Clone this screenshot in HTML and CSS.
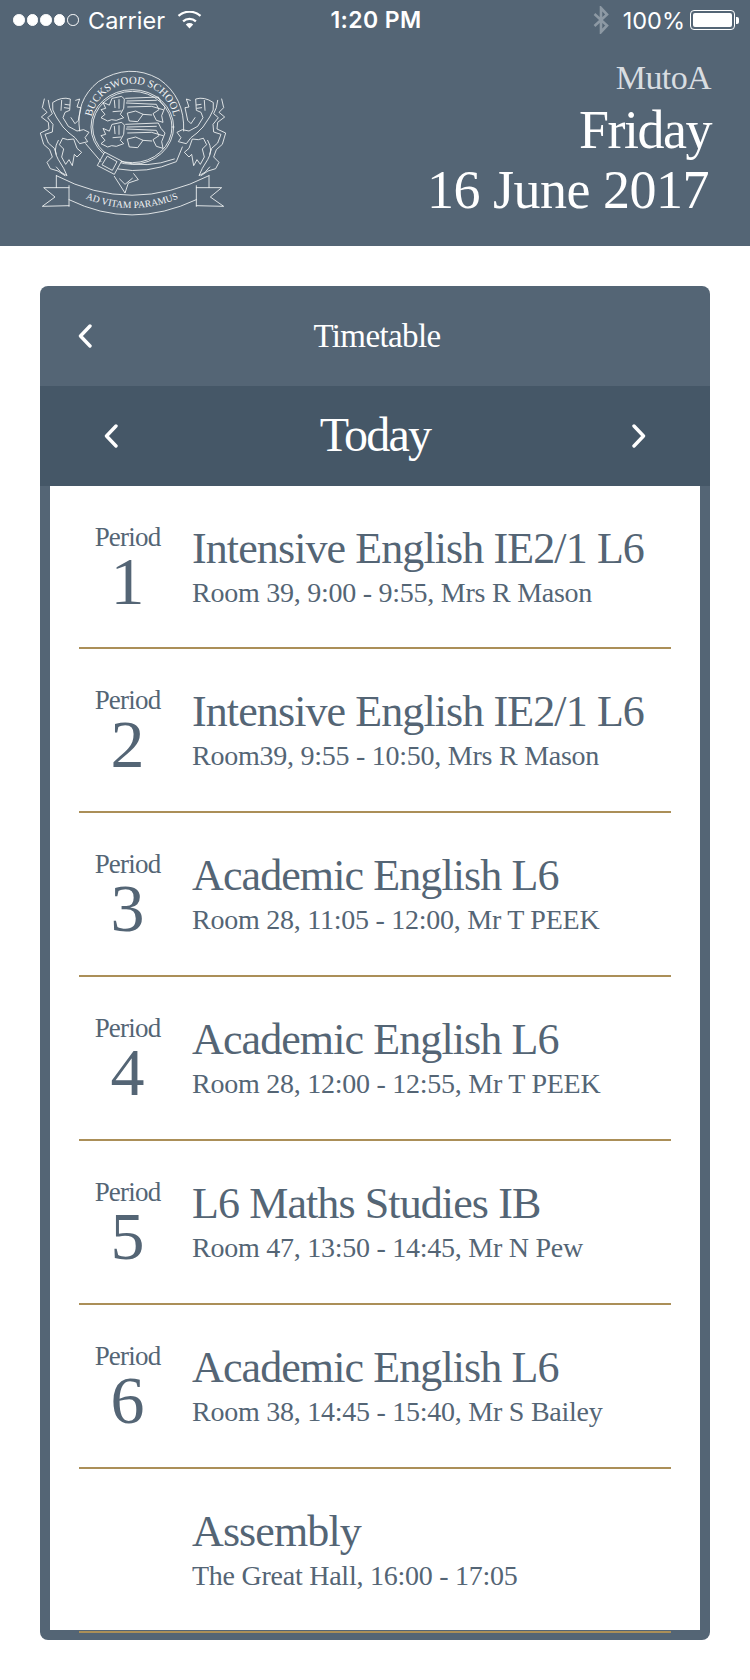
FILE: index.html
```html
<!DOCTYPE html>
<html lang="en">
<head>
<meta charset="utf-8">
<title>Timetable</title>
<link rel="stylesheet" href="styles.css">
</head>
<body>
<header class="top">
  <div class="status">
    <div class="status-left">
      <span class="signal"><i></i><i></i><i></i><i></i><i class="off"></i></span>
      <span>Carrier</span>
      <svg class="wifi" viewBox="0 0 24 18"><path d="M12 17.5 8.3 13.4a5.4 5.4 0 0 1 7.4 0Z" fill="#fff"/><path d="M5.600 10.400a9.400 9.400 0 0 1 12.800 0" fill="none" stroke="#fff" stroke-width="2.200"/><path d="M1 4.900a16.500 16.500 0 0 1 22 0" fill="none" stroke="#fff" stroke-width="2.200"/></svg>
    </div>
    <div class="status-time">1:20 PM</div>
    <div class="status-right">
      <svg class="bt" viewBox="0 0 16 28"><path d="M1.500 8 14 19.500 8 26V2l6 6.500L1.500 20" fill="none" stroke="#8d99a4" stroke-width="2.600"/></svg>
      <span>100%</span>
      <span class="battery"><span class="battery-fill"></span></span><span class="battery-tip"></span>
    </div>
  </div>
  <div class="brand">
    <svg class="crest" viewBox="115 200 570 450" fill="none" stroke="#f2f4f5" stroke-width="2.600" stroke-linejoin="round" stroke-linecap="round">
      <defs>
        <path id="ringText" d="M274 372 A125 122 0 1 1 524 372"/>
        <path id="ribbonText" d="M222 578 Q395 668 572 578"/>
        <g id="lion">
          <path d="M134 296 L128 322 L142 336 L125 350 L146 366 L148 386 L122 398 L132 432 L150 448 L158 470 L142 486 L152 505 L175 512 L196 526"/>
          <path d="M146 300 L150 322 L158 340 L144 352 L160 372 L158 395 L136 402 L146 428 L164 444 L170 462"/>
          <path d="M160 306 Q186 288 212 296 L210 330 L196 336 L190 352 L206 378 L232 392 L252 388 L268 396 L256 412 L264 424 L240 430 L226 412 L208 398 L190 380 L170 350 L160 330 Z"/>
          <path d="M186 300 L184 330 M196 312 L210 314 M194 322 L208 324"/>
          <path d="M228 300 L240 296 L232 320 L244 322 L236 360 L226 370 L214 352"/>
          <path d="M190 414 L204 418 L222 416 L232 444 L246 456 L232 470 L224 462 L218 496 L208 478 L198 492 L186 470 L192 446 L180 434 Z"/>
          <path d="M176 420 Q158 450 176 478 L192 504 L202 526 L184 516 L170 500"/>
        </g>
        <g id="shieldLion">
          <path d="M338 294 L366 288 L374 296 L372 324 L362 342 L372 352 L350 360 L336 358 L324 362 L304 352 L316 342 L304 328 L318 324 L310 306 L328 314 Z"/>
          <path d="M344 300 L346 322 M358 298 L358 324 M340 334 L364 332"/>
          <path d="M378 294 L476 290 L484 306 L496 320 L486 346 L490 366 L470 360 L460 340 L478 328 L470 312 L380 308"/>
          <path d="M382 302 L470 300 M384 320 L456 318 L490 328"/>
          <path d="M384 338 L408 332 L430 342 L414 364 L390 362 Z M430 342 L456 344"/>
        </g>
      </defs>
      <path d="M240 392 Q226 300 296 244 Q388 186 478 236 Q556 290 552 392"/>
      <ellipse cx="398" cy="380" rx="124" ry="112"/>
      <ellipse cx="398" cy="380" rx="119" ry="107"/>
      <use href="#lion"/>
      <use href="#lion" transform="matrix(-1 0 0 1 800 0)"/>
      <use href="#shieldLion"/>
      <use href="#shieldLion" transform="translate(0 78)"/>
      <path d="M316 456 L366 482 L344 522 L294 496 Z M324 468 L352 484 L338 510 L308 494 Z" fill="#546575"/>
      <path d="M366 484 Q440 506 524 476 M356 506 Q440 522 530 484 L548 440 M258 430 L304 484"/>
      <path d="M344 528 L376 578 L386 548 L416 538 L402 520 M360 536 L376 552 L398 534"/>
      <path d="M170 526 Q395 644 628 526 M208 598 Q395 690 590 598"/>
      <path d="M170 526 V562 M628 526 V562 M208 556 V618 M590 556 V618"/>
      <path d="M208 616 L128 618 L166 590 L132 562 L208 562 M590 562 L666 562 L632 590 L672 618 L590 616"/>
      <text class="crest-text"><textPath href="#ringText" startOffset="50%">BUCKSWOOD SCHOOL</textPath></text>
      <text class="crest-text small"><textPath href="#ribbonText" startOffset="50%">AD VITAM PARAMUS</textPath></text>
    </svg>
    <div class="who">
      <div class="who-name">MutoA</div>
      <div class="who-day">Friday</div>
      <div class="who-date">16 June 2017</div>
    </div>
  </div>
</header>
<main class="card">
  <div class="nav">
    <svg class="chev" viewBox="0 0 14 24"><path d="M12 2 2.500 12 12 22"/></svg>
    <div class="nav-title">Timetable</div>
    <span></span>
  </div>
  <div class="day">
    <svg class="chev" viewBox="0 0 14 24"><path d="M12 2 2.500 12 12 22"/></svg>
    <div class="day-title">Today</div>
    <svg class="chev" viewBox="0 0 14 24"><path d="M2 2 11.500 12 2 22"/></svg>
  </div>
  <div class="body">
    <ul class="list">
      <li class="row"><div class="period"><span class="p-label">Period</span><span class="p-num">1</span></div><div class="info"><div class="title">Intensive English IE2/1 L6</div><div class="sub">Room 39, 9:00 - 9:55, Mrs R Mason</div></div></li>
      <li class="row"><div class="period"><span class="p-label">Period</span><span class="p-num">2</span></div><div class="info"><div class="title">Intensive English IE2/1 L6</div><div class="sub">Room39, 9:55 - 10:50, Mrs R Mason</div></div></li>
      <li class="row"><div class="period"><span class="p-label">Period</span><span class="p-num">3</span></div><div class="info"><div class="title">Academic English L6</div><div class="sub">Room 28, 11:05 - 12:00, Mr T PEEK</div></div></li>
      <li class="row"><div class="period"><span class="p-label">Period</span><span class="p-num">4</span></div><div class="info"><div class="title">Academic English L6</div><div class="sub">Room 28, 12:00 - 12:55, Mr T PEEK</div></div></li>
      <li class="row"><div class="period"><span class="p-label">Period</span><span class="p-num">5</span></div><div class="info"><div class="title">L6 Maths Studies IB</div><div class="sub">Room 47, 13:50 - 14:45, Mr N Pew</div></div></li>
      <li class="row"><div class="period"><span class="p-label">Period</span><span class="p-num">6</span></div><div class="info"><div class="title">Academic English L6</div><div class="sub">Room 38, 14:45 - 15:40, Mr S Bailey</div></div></li>
      <li class="row"><div class="period"></div><div class="info"><div class="title">Assembly</div><div class="sub">The Great Hall, 16:00 - 17:05</div></div></li>
    </ul>
  </div>
</main>
</body>
</html>
```
FILE: styles.css
```css
* { box-sizing: border-box; }
html, body { margin: 0; padding: 0; }
body { width: 750px; height: 1680px; background: #fff; font-family: "Liberation Serif", serif; color: #546575; overflow: hidden; }

.top { height: 246px; background: #546575; color: #fff; }
.status { display: grid; grid-template-columns: 1fr auto 1fr; align-items: center; height: 40px; padding: 0 11px 0 13px; font-family: Inter, "Liberation Sans", sans-serif; font-size: 23.500px; color: #fff; }
.status-left { display: flex; align-items: center; gap: 9px; }
.signal { display: flex; gap: 2px; }
.signal i { display: block; width: 11.600px; height: 11.600px; border-radius: 50%; background: #fff; border: 1px solid #fff; }
.signal i.off { background: none; }
.wifi { width: 25px; height: 18px; margin-left: 3px; }
.status-time { font-weight: 600; font-size: 23px; letter-spacing: 0.400px; }
.status-right { display: flex; align-items: center; justify-content: flex-end; }
.bt { width: 16px; height: 28px; margin-right: 14px; }
.battery { display: block; width: 45px; height: 20px; margin-left: 5px; padding: 2px; border: 1px solid #fff; border-radius: 4px; }
.battery-fill { display: block; height: 100%; background: #fff; border-radius: 2px; }
.battery-tip { display: block; width: 3px; height: 7px; margin-left: 1px; background: #fff; border-radius: 0 2px 2px 0; }

.brand { display: flex; justify-content: space-between; align-items: flex-start; padding: 17px 39px 0 38px; }
.crest { display: block; width: 190px; height: 150px; margin-top: 9.670px; }
.crest-text { font-family: "Liberation Serif", serif; font-size: 32px; fill: #f2f4f5; stroke: none; text-anchor: middle; }
.crest-text.small { font-size: 29px; }
.who { text-align: right; }
.who-name { font-size: 34px; line-height: 42px; color: #d9dde1; letter-spacing: -0.600px; }
.who-day { font-size: 54px; line-height: 62px; letter-spacing: -1.500px; }
.who-date { font-size: 54px; line-height: 58px; letter-spacing: -0.500px; margin-right: 2px; }

.card { width: 670px; height: 1354px; margin: 40px 0 0 40px; background: #546575; border-radius: 8px; }
.nav { display: grid; grid-template-columns: 40px 1fr 40px; align-items: center; height: 100px; padding: 0 38px; color: #fff; }
.chev { width: 14px; height: 24px; fill: none; stroke: #fff; stroke-width: 3.400; stroke-linecap: round; stroke-linejoin: round; }
.nav-title { text-align: center; font-size: 33px; letter-spacing: -0.600px; padding-left: 4px; }
.day { display: flex; justify-content: space-between; align-items: center; height: 100px; padding: 0 64px; background: #455767; color: #fff; }
.day-title { font-size: 48px; line-height: 52px; letter-spacing: -1.800px; margin-top: -3px; }
.body { height: 1144px; margin: 0 10px; background: #fff; }
.list { list-style: none; margin: 0; padding: 0; }
.row { display: grid; grid-template-columns: 97px 1fr; column-gap: 16px; height: 164px; margin: 0 29px; border-bottom: 2px solid #ab8f58; padding-top: 37px; white-space: nowrap; }
.row:first-child { height: 163px; }
.period { display: flex; flex-direction: column; align-items: center; }
.p-label { font-size: 27px; line-height: 30px; letter-spacing: -0.800px; margin-top: -1px; }
.p-num { font-size: 68px; line-height: 58px; }
.title { font-size: 44px; line-height: 52px; letter-spacing: -0.900px; }
.sub { font-size: 28px; line-height: 36px; letter-spacing: -0.250px; }
```
